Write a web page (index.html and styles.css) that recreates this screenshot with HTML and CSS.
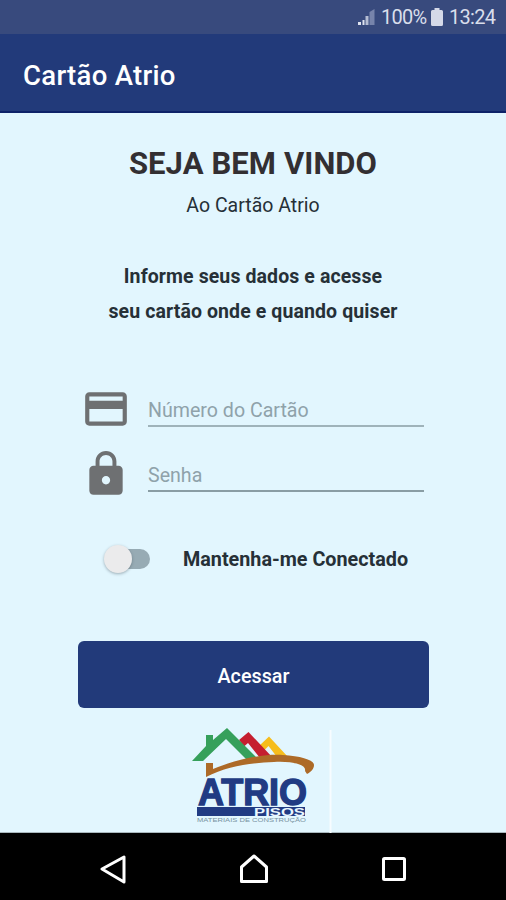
FILE: index.html
```html
<!DOCTYPE html>
<html lang="pt-BR">
<head>
<meta charset="utf-8">
<title>Cartão Atrio</title>
<link rel="stylesheet" href="styles.css">
</head>
<body>
<div class="status">
  <svg class="signal" width="18" height="18" viewBox="0 0 18 18"><path d="M0 17v-3h3v3zM4.500 17v-5h2v5z" fill="#dfe3ef"/><path d="M7.500 17v-9h3v9z" fill="#b5bdd3"/><path d="M11.500 17V4l5-3v16z" fill="#7784ab"/></svg>
  <span class="percent">100%</span>
  <svg class="battery" width="12" height="18" viewBox="0 0 12 18"><path d="M3.500 0h5v2h2q1.500 0 1.500 1.500V16.500q0 1.500-1.500 1.500h-9Q0 18 0 16.500V3.500Q0 2 1.500 2h2z" fill="#d5d9e8"/></svg>
  <span class="time">13:24</span>
</div>
<header class="appbar"><span class="appname">Cartão Atrio</span></header>
<main class="content">
  <h1 class="title">SEJA BEM VINDO</h1>
  <p class="subtitle">Ao Cartão Atrio</p>
  <p class="intro"><span class="line1">Informe seus dados e acesse</span><br><span class="line2">seu cartão onde e quando quiser</span></p>
  <form class="form">
    <div class="row">
      <svg class="icon" viewBox="0 0 24 24"><path d="M20 4H4c-1.110 0-1.990.890-1.990 2L2 18c0 1.110.890 2 2 2h16c1.110 0 2-.890 2-2V6c0-1.110-.890-2-2-2zm0 14H4v-6h16v6zm0-10H4V6h16v2z"/></svg>
      <div class="field"><span class="card-label">Número do Cartão</span></div>
    </div>
    <div class="row">
      <svg class="icon" viewBox="0 0 24 24"><path d="M18 8h-1V6c0-2.760-2.240-5-5-5S7 3.240 7 6v2H6c-1.100 0-2 .900-2 2v10c0 1.100.900 2 2 2h12c1.100 0 2-.900 2-2V10c0-1.100-.900-2-2-2zm-6 9c-1.100 0-2-.900-2-2s.900-2 2-2 2 .900 2 2-.900 2-2 2zm3.100-9H8.900V6c0-1.710 1.390-3.100 3.100-3.100s3.100 1.390 3.100 3.100v2z"/></svg>
      <div class="field password"><span class="pass-label">Senha</span></div>
    </div>
    <div class="remember"><span class="switch"><span class="thumb"></span></span><span class="remember-label">Mantenha-me Conectado</span></div>
    <div class="submit"><span class="submit-label">Acessar</span></div>
  </form>
  <div class="brand">
    <svg class="logo" width="160" height="118" viewBox="0 0 160 118">
      <path d="M79 31 89 21.500 108 42H97L88.500 31l-5 5z" fill="#f6bd1d"/>
      <path d="M59 25 68.500 17 93 43H80L68 28l-4 3.500z" fill="#c51f30"/>
      <path d="M12 46 26 31V20h7v5L47 13 77 43l-10 2L46 24 23 46z" fill="#36a05b"/>
      <path d="M26 48h7v6C62 42 87 39 103 40c18 1 31 5 31 10 0 4-3 7-7 9l-2-3c2-7-15-10-31-9-24 1-47 4-68 15z" fill="#ad6a27"/>
      <text class="wordmark" x="18" y="90" textLength="109" lengthAdjust="spacing">ATRIO</text>
      <path d="M17 92h108v9H17z" fill="#213b83"/>
      <text class="pisos" x="74" y="100.500" textLength="51" lengthAdjust="spacingAndGlyphs">PISOS</text>
      <text class="tagline" x="17" y="106.500" textLength="109" lengthAdjust="spacingAndGlyphs">MATERIAIS DE CONSTRUÇÃO</text>
      <path d="M149.500 15h2v103h-2z" fill="#f7fcff"/>
    </svg>
  </div>
</main>
<nav class="nav">
  <svg width="26" height="30" viewBox="0 0 26 30"><path d="M2 15 24 3v25z"/></svg>
  <svg width="30" height="30" viewBox="0 0 30 30"><path d="M2.500 13 15 2l12.500 11v14.500h-25z"/></svg>
  <svg width="26" height="30" viewBox="0 0 26 30"><rect x="2.500" y="4.500" width="21" height="21" rx="1"/></svg>
</nav>
</body>
</html>
```
FILE: styles.css
```css
* { box-sizing: border-box; }
body { margin: 0; width: 506px; height: 900px; overflow: hidden; background: #e2f6fe; font-family: Roboto, "Liberation Sans", sans-serif; color: #263037; }
h1, p { margin: 0; font-weight: normal; }
span { white-space: nowrap; }
.status { height: 34px; padding: 0 0 0 358px; display: flex; align-items: center; background: #384a7d; color: #d9deeb; font-size: 20px; }
.percent { width: 49px; margin-left: 5px; letter-spacing: -0.7px; }
.battery { margin: 0 6px 0 1px; flex: none; }
.time { letter-spacing: -0.7px; }
.appbar { height: 79px; padding: 5px 0 0 23px; display: flex; align-items: center; background: #223a7a; border-bottom: 2px solid #0d2268; color: #fff; }
.appname { font-size: 27.5px; font-weight: 500; letter-spacing: 0.3px; }
.content { height: 720px; padding-top: 31px; border-bottom: 1px solid #a9b8be; }
.title { text-align: center; font-size: 31px; line-height: 40px; font-weight: 700; color: #332f32; letter-spacing: 0.1px; }
.subtitle { margin-top: 7px; text-align: center; font-size: 19.5px; line-height: 30px; }
.intro { margin-top: 38px; text-align: center; font-size: 19.5px; line-height: 35px; font-weight: 700; letter-spacing: 0.1px; }
.form { margin: 55px 0 0 78px; width: 351px; }
.row { display: flex; align-items: flex-start; gap: 17px; height: 50px; margin: 0 0 14.500px 3px; }
.icon { width: 50px; height: 50px; fill: #6e7072; }
.field { width: 276px; height: 43px; padding-top: 11px; border-bottom: 2.500px solid #9fb3ba; font-size: 19.6px; line-height: 32px; color: #8fa2aa; }
.password { border-color: #899da4; }
.remember { display: flex; align-items: center; height: 40px; margin-top: 40px; padding-left: 28px; font-size: 19.75px; font-weight: 700; }
.remember-label { padding-top: 2px; }
.switch { width: 44px; height: 20px; margin-right: 33px; border-radius: 10px; background: #97abb4; display: flex; align-items: center; }
.thumb { width: 28px; height: 28px; flex: none; margin-left: -2px; border-radius: 50%; background: #ebebec; box-shadow: 0 1px 3px rgba(50, 65, 75, .4); }
.submit { height: 67px; margin-top: 62px; border-radius: 6px; background: #223a7a; color: #fff; display: flex; align-items: center; justify-content: center; padding-top: 4px; font-size: 19.75px; font-weight: 500; }
.brand { margin: 7px 0 0 180px; height: 117px; }
.logo { display: block; }
.wordmark { font: 700 36px "Liberation Sans", sans-serif; fill: #213b83; stroke: #213b83; stroke-width: 1.300px; }
.pisos { font: 700 11.5px "Liberation Sans", sans-serif; fill: #eaf7ff; }
.tagline { font: 5.500px "Liberation Sans", sans-serif; fill: #77929f; }
.nav { height: 67px; padding: 4px 99px 0 100px; display: flex; align-items: center; justify-content: space-between; background: #000; }
.nav svg { fill: none; stroke: #fff; stroke-width: 3; stroke-linejoin: round; }
```
